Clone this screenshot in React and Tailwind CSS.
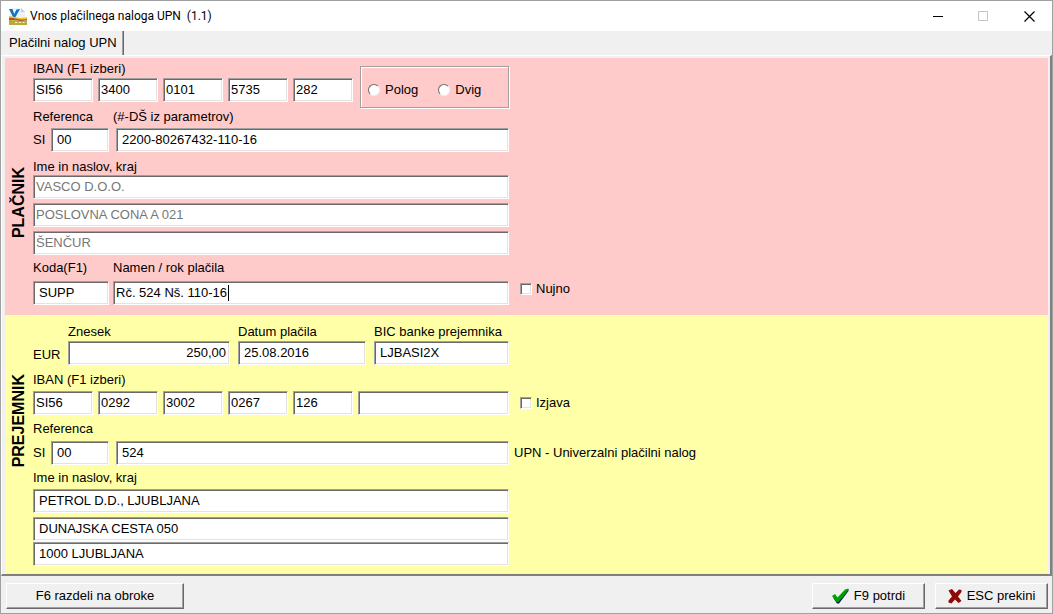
import React, { useState } from 'react';
import clsx from 'clsx';

const PAYER_ADDRESS = ['VASCO D.O.O.', 'POSLOVNA CONA A 021', 'ŠENČUR'];

const AppIcon = () => (
    <svg width="18" height="17" viewBox="0 0 18 17" aria-hidden="true">
        <path d="M1 0h11l4 4v6H1z" fill="#edf3f9" />
        <path d="M12 0l4 4h-4z" fill="#b9cfe2" />
        <path d="M0 1h3.500l1.700 5L7.500 1.500 11 1 6.500 9H4z" fill="#1272c4" />
        <path d="M0 8c5 0 9 3.500 18 1v3H0z" fill="#f2c22e" />
        <path d="M0 10c5-1 9 3 18 1v1.500C11 14 6 11.500 0 12z" fill="#b5532c" />
        <path d="M0 12c6-.5 10 1.500 18 .5V17H0z" fill="#b3ad3c" />
        <path d="M6 14.500h2.500M10 14.500h2M13.500 14.500h2" stroke="#f5f3cf" />
    </svg>
);

const CheckIcon = () => (
    <svg width="17" height="16" viewBox="0 0 17 16" aria-hidden="true">
        <path d="M1 9.500l3-1 2 2.500 8-8.500 2.500-1v1.500L7 15.500H5z" fill="#0b1a5c" />
        <path d="M0 8l3-2 2.500 3.500L13 1.500l3.500-1v1.500L6.500 14H4.500z" fill="#00a000" />
    </svg>
);

const CrossIcon = () => (
    <svg width="14" height="16" viewBox="0 0 14 16" aria-hidden="true">
        <path d="M.5 2.500L4 1l3.500 4L11 1.500l2.500.5v2L10 8.500l3.500 4.500-3 2L7 11.500l-3.500 4L.5 14.500v-2l3.500-4z" fill="#900808" />
    </svg>
);

const Field = ({ label, value, className, ...rest }) => (
    <input
        type="text"
        aria-label={label}
        defaultValue={value}
        className={clsx(
            'h-6 min-w-0 bg-white border border-t-[#a0a0a0] border-l-[#a0a0a0] border-r-white border-b-white shadow-[inset_1px_1px_0_#696969,inset_-1px_-1px_0_#e3e3e3] pb-px outline-none disabled:text-[#777]',
            className
        )}
        {...rest}
    />
);

const IbanFields = ({ values, children }) => (
    <div className="flex gap-[5px]">
        {values.map((v, i) => (
            <Field key={i} label={`IBAN ${i + 1}`} value={v} className="w-[60px] px-0.5" />
        ))}
        {children}
    </div>
);

const Reference = ({ value }) => (
    <div className="flex items-center">
        <span className="w-[18px]">SI</span>
        <Field label="Model" value="00" className="w-[58px] pl-[5px] mr-[7px]" />
        <Field label="Referenca" value={value} className="flex-1 pl-[5px]" />
    </div>
);

const Tick = ({ label, className }) => (
    <label className={clsx('flex items-center gap-1', className)}>
        <input
            type="checkbox"
            className="appearance-none w-3 h-3 bg-white border border-t-[#a0a0a0] border-l-[#a0a0a0] border-r-white border-b-white shadow-[inset_1px_1px_0_#696969,inset_-1px_-1px_0_#e3e3e3] checked:bg-gray-600"
        />
        {label}
    </label>
);

const Radio = ({ label, checked, onChange }) => (
    <label className="flex items-center gap-[5px]">
        <input
            type="radio"
            name="cash"
            checked={checked}
            onChange={onChange}
            className="appearance-none w-3 h-3 rounded-full bg-white border border-t-[#6b6b6b] border-l-[#6b6b6b] border-r-[#f0f0f0] border-b-[#f0f0f0] checked:bg-gray-600"
        />
        {label}
    </label>
);

const Section = ({ title, className, titleClass, children }) => (
    <section className={clsx('flex', className)}>
        <div className={clsx('w-7 shrink-0 flex items-center justify-center', titleClass)}>
            <h2 className="[writing-mode:vertical-rl] rotate-180 text-base leading-5 font-bold">{title}</h2>
        </div>
        <div className="flex-1 min-w-0">{children}</div>
    </section>
);

const PushButton = ({ className, children }) => (
    <button
        type="button"
        className={clsx(
            'h-[26px] flex items-center justify-center gap-[5px] bg-[#f0f0f0] border border-t-white border-l-white border-r-[#696969] border-b-[#696969] shadow-[inset_-1px_-1px_0_#a0a0a0]',
            className
        )}
    >
        {children}
    </button>
);

const App = () => {
    const [cash, setCash] = useState('');
    const [editing, setEditing] = useState(false);

    return (
        <div className="min-h-screen flex flex-col bg-[#f0f0f0] border border-[#a0a0a0] text-[13px] leading-4 text-black font-['Liberation_Sans',Arial,sans-serif]">
            {/* Title bar */}
            <header className="h-[30px] shrink-0 flex items-center bg-white pl-2">
                <AppIcon />
                <h1 className="ml-[3px] flex-1 whitespace-pre text-xs font-['Roboto',sans-serif]">{'Vnos plačilnega naloga UPN  (1.1)'}</h1>
                <div className="flex">
                    <button type="button" aria-label="Minimize" className="w-[45px] h-7 flex items-center justify-center">
                        <svg width="11" height="11"><path d="M0 5.500h10" stroke="#000" /></svg>
                    </button>
                    <button type="button" aria-label="Maximize" disabled className="w-[45px] h-7 flex items-center justify-center">
                        <svg width="11" height="11"><path d="M.5.5h9v9h-9z" fill="none" stroke="#c4c4c4" /></svg>
                    </button>
                    <button type="button" aria-label="Close" className="w-[46px] h-7 flex items-center justify-center">
                        <svg width="11" height="11"><path d="M.5.5l10 10M10.500.5l-10 10" stroke="#000" strokeWidth="1.200" /></svg>
                    </button>
                </div>
            </header>

            {/* Tabs */}
            <div className="flex">
                <button type="button" className="h-6 pl-2 pr-1.5 border-r border-[#696969] shadow-[inset_-1px_0_0_#a0a0a0]">Plačilni nalog UPN</button>
            </div>

            {/* Form */}
            <main className="border-t border-t-white border-l border-l-white border-r-2 border-b-2 border-r-[#808080] border-b-[#808080] pl-[3px] pr-[2px] pt-0.5 pb-px">
                <Section title="PLAČNIK" className="bg-[#ffcaca] pt-[3px] pb-2.5" titleClass="pt-10">
                    <div className="flex items-start gap-[7px]">
                        <div>
                            <p className="mb-px">IBAN (F1 izberi)</p>
                            <IbanFields values={['SI56', '3400', '0101', '5735', '282']} />
                        </div>
                        <fieldset className="mt-[5px] w-[149px] h-[42px] border border-[#a0a0a0] shadow-[1px_1px_0_#fff,inset_1px_1px_0_#fff] flex items-center pt-[5px] pl-[7px] gap-5">
                            <Radio label="Polog" checked={cash === 'polog'} onChange={() => setCash('polog')} />
                            <Radio label="Dvig" checked={cash === 'dvig'} onChange={() => setCash('dvig')} />
                        </fieldset>
                    </div>
                    <div className="w-[476px]">
                        <div className="flex mt-px mb-[3px]">
                            <span className="w-20">Referenca</span>
                            <span>(#-DŠ iz parametrov)</span>
                        </div>
                        <Reference value="2200-80267432-110-16" />
                        <p className="mt-[7px]">Ime in naslov, kraj</p>
                        <div className="flex flex-col gap-1">
                            {PAYER_ADDRESS.map(line => (
                                <Field key={line} label="Naslov plačnika" value={line} disabled className="w-full px-0.5" />
                            ))}
                        </div>
                        <div className="flex mt-[5px] mb-[5px]">
                            <span className="w-20">Koda(F1)</span>
                            <span>Namen / rok plačila</span>
                        </div>
                    </div>
                    <div className="flex items-start">
                        <div className="w-[476px] flex gap-1">
                            <Field label="Koda" value="SUPP" className="w-[76px] pl-[5px]" />
                            <div className="relative flex-1 flex">
                                <Field
                                    label="Namen / rok plačila"
                                    value="Rč. 524 Nš. 110-16"
                                    onFocus={() => setEditing(true)}
                                    className="flex-1 px-0.5"
                                />
                                {/* resting caret, replaced by the native one on focus */}
                                {!editing && <span className="absolute left-[115px] top-1 w-px h-4 bg-black pointer-events-none" />}
                            </div>
                        </div>
                        <Tick label="Nujno" className="ml-[11px]" />
                    </div>
                </Section>

                <Section title="PREJEMNIK" className="bg-[#ffffa8] pt-[9px] pb-[7px]" titleClass="pb-12">
                    <div className="w-[476px] flex items-end gap-2">
                        <span className="w-[27px] mb-0.5">EUR</span>
                        <label className="w-[162px] flex flex-col gap-px">
                            Znesek
                            <Field value="250,00" className="text-right pr-[3px]" />
                        </label>
                        <label className="w-32 flex flex-col gap-px">
                            Datum plačila
                            <Field value="25.08.2016" className="pl-[5px]" />
                        </label>
                        <label className="flex-1 min-w-0 flex flex-col gap-px">
                            BIC banke prejemnika
                            <Field value="LJBASI2X" className="pl-[5px]" />
                        </label>
                    </div>
                    <p className="mt-[7px] mb-[3px]">IBAN (F1 izberi)</p>
                    <div className="flex items-center">
                        <div className="w-[476px]">
                            <IbanFields values={['SI56', '0292', '3002', '0267', '126']}>
                                <Field label="IBAN 6" value="" className="flex-1" />
                            </IbanFields>
                        </div>
                        <Tick label="Izjava" className="ml-[11px]" />
                    </div>
                    <p className="mt-1.5 mb-1">Referenca</p>
                    <div className="flex items-center">
                        <div className="w-[476px]"><Reference value="524" /></div>
                        <span className="ml-[5px]">UPN - Univerzalni plačilni nalog</span>
                    </div>
                    <p className="mt-[5px] mb-[3px]">Ime in naslov, kraj</p>
                    <div className="w-[476px] flex flex-col">
                        <Field label="Ime prejemnika" value="PETROL D.D., LJUBLJANA" className="pl-[5px] mb-1" />
                        <Field label="Naslov prejemnika" value="DUNAJSKA CESTA 050" className="pl-[5px] mb-px" />
                        <Field label="Kraj prejemnika" value="1000 LJUBLJANA" className="pl-[5px]" />
                    </div>
                </Section>
            </main>

            {/* Actions */}
            <footer className="flex items-center justify-between pt-[7px] pl-[5px] pr-1">
                <PushButton className="w-[178px]">F6 razdeli na obroke</PushButton>
                <div className="flex gap-2.5">
                    <PushButton className="w-[113px]"><CheckIcon />F9 potrdi</PushButton>
                    <PushButton className="w-[113px]"><CrossIcon />ESC prekini</PushButton>
                </div>
            </footer>
        </div>
    );
};

export default App;
